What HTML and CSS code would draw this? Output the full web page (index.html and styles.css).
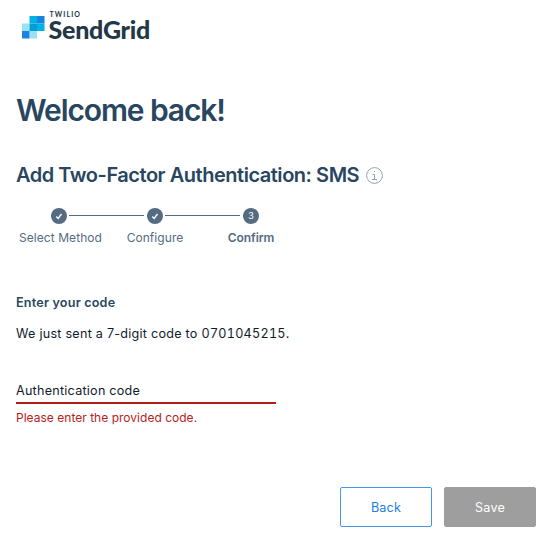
FILE: index.html
```
<!DOCTYPE html>
<html lang="en"><head><meta charset="utf-8"><title>Two-Factor Authentication</title><link rel="stylesheet" href="styles.css"></head>
<body>
<header class="brand">
<svg class="mark" viewBox="0 0 22.5 22.5" aria-hidden="true"><path fill="#99e1f4" d="M0 7.5h7.5V15H0zM7.5 15H15v7.5H7.5z"/><path fill="#1a82e2" d="M0 15h7.5v7.5H0zM15 0h7.5v7.5H15z"/><path fill="#00b2e3" d="M7.5 0H15v7.5H7.5zM15 7.5h7.5V15H15z"/><path fill="#009dd9" d="M7.5 7.5H15V15H7.5z"/></svg>
<div class="brand-text"><span class="brand-top">TWILIO</span><span class="brand-name">SendGrid</span></div>
</header>
<main>
<h1>Welcome back!</h1>
<h2>Add Two-Factor Authentication: SMS <svg class="info" viewBox="0 0 17 17"><circle cx="8.5" cy="8.5" r="7.9"/><path d="M6.5 7.5h2v5M6 12.5h5M8 4.5h1"/></svg></h2>
<ol class="steps">
<li><span class="dot"><svg viewBox="0 0 16 16"><path d="M5.3 8.4l1.9 2 3.3-4.4"/></svg></span><span class="label">Select Method</span></li>
<li><span class="dot"><svg viewBox="0 0 16 16"><path d="M5.3 8.4l1.9 2 3.3-4.4"/></svg></span><span class="label">Configure</span></li>
<li class="current"><span class="dot">3</span><span class="label">Confirm</span></li>
</ol>
<h3>Enter your code</h3>
<p class="sent">We just sent a 7-digit code to <span class="phone">0701045215</span>.</p>
<div class="field">Authentication code</div>
<p class="error">Please enter the provided code.</p>
<div class="actions"><button class="back">Back</button><button class="save">Save</button></div>
</main>
</body></html>
```
FILE: styles.css
```
* { box-sizing: border-box; }
body { margin: 0; padding: 0 8px 0 16px; height: 533px; overflow: hidden; background: #fff; color: #111b2b; font: 12.6px/20px Inter, sans-serif; }
h1, h2, h3, p, ol { margin: 0; padding: 0; }
.brand { display: flex; height: 90px; padding: 10px 0 0 6px; }
.mark { width: 22.5px; height: 22.5px; margin: 6px 4px 0 0; }
.brand-text { display: flex; flex-direction: column; color: #233746; }
.brand-top { padding-left: 1px; font: 700 7px/8px Lato, sans-serif; letter-spacing: 1.1px; }
.brand-name { margin-top: -1px; height: 25px; font: 900 25px/25px Lato, sans-serif; letter-spacing: -.25px; }
h1 { font-size: 30px; line-height: 40px; font-weight: 600; letter-spacing: -1.1px; color: #294661; }
h2 { display: flex; align-items: center; margin-top: 33px; font-size: 20px; line-height: 24px; font-weight: 600; color: #294661; letter-spacing: -.47px; }
.info { width: 17px; height: 17px; margin-left: 7px; fill: none; stroke: #94a1b0; stroke-width: 1; }
.steps { display: flex; list-style: none; margin: 21px 0 0 -5px; }
.steps li { width: 96px; display: flex; flex-direction: column; align-items: center; color: #546b81; font-size: 12px; position: relative; }
.steps li + li::before { content: ""; position: absolute; left: -38px; top: 7px; width: 75px; height: 1px; background: #546b81; }
.dot { width: 16px; height: 16px; border-radius: 50%; background: #546b81; color: #fff; font-size: 9px; line-height: 16px; text-align: center; }
.dot svg { display: block; fill: none; stroke: #fff; stroke-width: 1.4; }
.label { margin-top: 4px; letter-spacing: .06px; white-space: nowrap; }
.steps li:first-child .label { padding-left: 3px; }
.current { font-weight: 600; }
.current .label { letter-spacing: -.05px; }
.current .dot { font-weight: 400; }
h3 { margin-top: 45px; font-size: 12.6px; line-height: 20px; font-weight: 600; color: #294661; letter-spacing: .2px; }
.sent { margin-top: 11px; letter-spacing: .25px; }
.phone { font-variant-numeric: tabular-nums; letter-spacing: .26px; }
.field { width: 260px; height: 24px; margin-top: 36px; border-bottom: 2px solid #b71c1c; line-height: 22px; letter-spacing: .24px; }
.error { margin-top: 4px; font-size: 12px; color: #b71c1c; letter-spacing: .02px; }
.actions { display: flex; justify-content: flex-end; gap: 12px; margin-top: 59px; }
button { width: 92px; height: 40px; padding: 1px 0 0; border: 1px solid #4596e6; border-radius: 2px; background: #fff; color: #1a82e2; font: 400 12.6px Inter, sans-serif; letter-spacing: .2px; }
.save { background: #9e9e9e; border-color: #9e9e9e; color: #fff; }
```
